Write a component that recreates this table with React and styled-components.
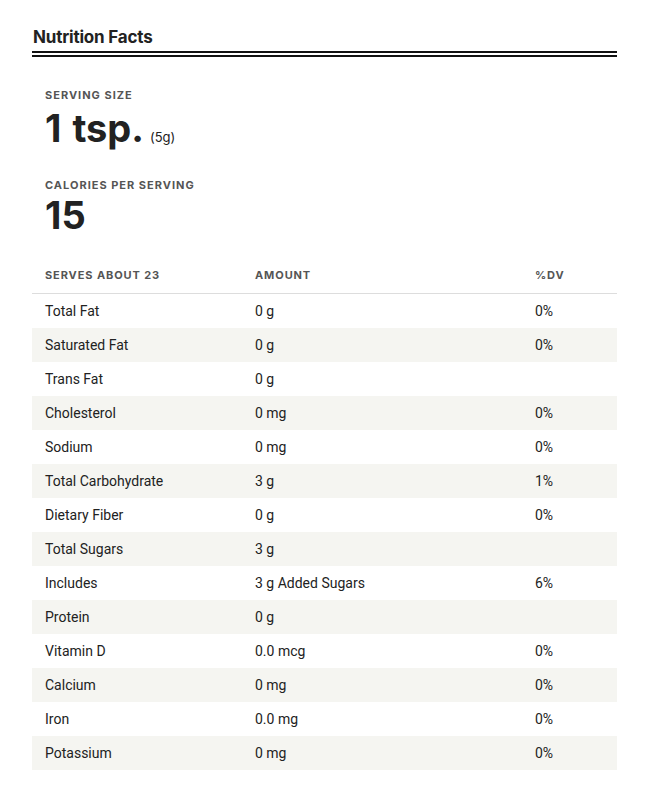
import React from "react";
import styled, { createGlobalStyle } from "styled-components";

const Global = createGlobalStyle`
  html, body { margin: 0; padding: 0; background: #fff; }
  body { font-family: Inter, "Liberation Sans", sans-serif; color: #222; }
`;

const Page = styled.div`
  width: 585px;
  padding: 26px 0 0 32px;
`;

const Title = styled.h2`
  margin: 0 0 0 1px;
  font-size: 17px;
  line-height: 22px;
  font-weight: 700;
  color: #222;
  letter-spacing: -0.2px;
`;

const DoubleRule = styled.div`
  margin-top: 3px;
  height: 2px;
  border-top: 2px solid #111;
  border-bottom: 2px solid #111;
`;

const Summary = styled.div`
  padding: 31px 13px 0;
  display: flex;
  flex-direction: column;
`;

const Label = styled.div`
  font-size: 11px;
  line-height: 14px;
  font-weight: 700;
  letter-spacing: 1px;
  text-transform: uppercase;
  color: #555;
  margin-top: ${(p) => p.$top || 0}px;
`;

const Big = styled.div`
  margin-top: ${(p) => p.$top || 0}px;
  font-size: 38px;
  line-height: 40px;
  font-weight: 700;
  color: #222;
  letter-spacing: 0;
  word-spacing: 2px;
  display: flex;
  align-items: baseline;
  gap: 6px;
`;

const Small = styled.span`
  font-size: 13px;
  font-weight: 400;
  letter-spacing: 0;
  word-spacing: 0;
`;

const Table = styled.div`
  margin-top: 21px;
  display: flex;
  flex-direction: column;
`;

const Row = styled.div`
  display: grid;
  grid-template-columns: 210px 280px 1fr;
  height: 34px;
  align-items: center;
  padding-left: 13px;
  font-family: Roboto, "Liberation Sans", sans-serif;
  font-size: 14px;
  color: #222;
  background: ${(p) => (p.$shade ? "#f5f5f1" : "#fff")};
`;

const HeadRow = styled(Row)`
  height: 38px;
  font-family: Inter, "Liberation Sans", sans-serif;
  font-size: 11px;
  font-weight: 700;
  letter-spacing: 0.9px;
  color: #555;
  border-bottom: 1px solid #ddd;
  box-sizing: border-box;
`;

const rows = [
  ["Total Fat", "0 g", "0%"],
  ["Saturated Fat", "0 g", "0%"],
  ["Trans Fat", "0 g", ""],
  ["Cholesterol", "0 mg", "0%"],
  ["Sodium", "0 mg", "0%"],
  ["Total Carbohydrate", "3 g", "1%"],
  ["Dietary Fiber", "0 g", "0%"],
  ["Total Sugars", "3 g", ""],
  ["Includes", "3 g Added Sugars", "6%"],
  ["Protein", "0 g", ""],
  ["Vitamin D", "0.0 mcg", "0%"],
  ["Calcium", "0 mg", "0%"],
  ["Iron", "0.0 mg", "0%"],
  ["Potassium", "0 mg", "0%"],
];

export default function App() {
  return (
    <Page>
      <Global />
      <Title>Nutrition Facts</Title>
      <DoubleRule />
      <Summary>
        <Label>Serving Size</Label>
        <Big $top={6}>
          1 tsp.<Small>(5g)</Small>
        </Big>
        <Label $top={21}>Calories per Serving</Label>
        <Big $top={3}>15</Big>
      </Summary>
      <Table>
        <HeadRow>
          <span>SERVES ABOUT 23</span>
          <span>AMOUNT</span>
          <span>%DV</span>
        </HeadRow>
        {rows.map((r, i) => (
          <Row key={r[0]} $shade={i % 2 === 1}>
            <span>{r[0]}</span>
            <span>{r[1]}</span>
            <span>{r[2]}</span>
          </Row>
        ))}
      </Table>
    </Page>
  );
}
